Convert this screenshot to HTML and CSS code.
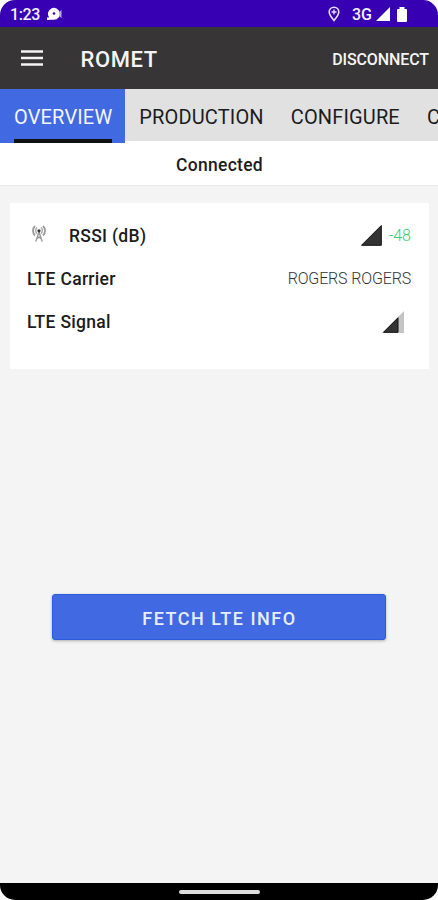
FILE: index.html
```
<!DOCTYPE html>
<html lang="en">
<head>
    <meta charset="UTF-8">
    <meta name="viewport" content="width=device-width, initial-scale=1.0">
    <title>Romet</title>
    <link rel="stylesheet" href="styles.css">
</head>
<body>
    <div class="phone">
        <div class="status-bar">
            <span class="clock">1:23</span>
            <svg class="notify-icon" width="16" height="14" viewBox="0 0 16 14">
                <path d="M0 13V10.500h2.200a6 6 0 1 1 4.800 2.300H3.500z" fill="#fff"/>
                <path d="M12.500 4.500l2-1.500v8l-2-1.500z" fill="#b9a6ea"/>
                <circle cx="7" cy="6.500" r="1.300" fill="#3700b3"/>
            </svg>
            <svg class="pin-icon" width="12" height="16" viewBox="0 0 12 16">
                <path d="M6 14.500C3 11 1.200 8.600 1.200 6a4.800 4.800 0 0 1 9.600 0c0 2.600-1.800 5-4.800 8.500z" fill="none" stroke="#e6defa" stroke-width="1.600"/>
                <path d="M6 3.500v5M3.500 6h5" stroke="#e6defa" stroke-width="1.400"/>
            </svg>
            <span class="network">3G</span>
            <svg class="cell-icon" width="14" height="14" viewBox="0 0 14 14">
                <path d="M0 14L14 0v14z" fill="#fff"/>
            </svg>
            <svg class="battery-icon" width="10" height="15" viewBox="0 0 10 15">
                <path d="M2.500 0h5v2H9a1 1 0 0 1 1 1v11a1 1 0 0 1-1 1H1a1 1 0 0 1-1-1V3a1 1 0 0 1 1-1h1.500z" fill="#fff"/>
            </svg>
        </div>

        <div class="app-bar">
            <svg class="menu-icon" width="22" height="16" viewBox="0 0 22 16">
                <path d="M0 1.500h22M0 8h22M0 14.500h22" stroke="#f4f4f4" stroke-width="2.600"/>
            </svg>
            <h1>ROMET</h1>
            <span class="disconnect">DISCONNECT</span>
        </div>

        <div class="tabs">
            <div class="tab active"><span>OVERVIEW</span></div>
            <div class="tab"><span>PRODUCTION</span></div>
            <div class="tab"><span>CONFIGURE</span></div>
            <div class="tab"><span>C</span></div>
        </div>

        <div class="connection">Connected</div>

        <div class="content">
            <div class="card">
                <div class="row">
                    <svg class="antenna-icon" width="14" height="18" viewBox="0 0 14 18">
                        <path d="M3 1C.4 3.500.4 8 3 10.500M11 1c2.600 2.500 2.600 7 0 9.500" fill="none" stroke="#999" stroke-width="1.800"/>
                        <path d="M5 2.500c-1.500 1.800-1.500 4.500 0 6.300M9 2.500c1.500 1.800 1.500 4.500 0 6.300" fill="none" stroke="#aaa" stroke-width="1.400"/>
                        <path d="M7 7L3.800 16.500M7 7l3.200 9.500M5.500 11.500l3.500 2M8.500 11.500l-3.500 2" fill="none" stroke="#999" stroke-width="1.400"/>
                        <circle cx="7" cy="5.800" r="1.600" fill="#333"/>
                    </svg>
                    <span class="label">RSSI (dB)</span>
                    <svg class="rssi-icon" width="22" height="22" viewBox="0 0 22 22">
                        <path d="M1.500 21.300L21.300 1.500v19.800z" fill="#333" stroke="#111" stroke-width="1"/>
                    </svg>
                    <span class="rssi-value">-48</span>
                </div>
                <div class="row">
                    <span class="label">LTE Carrier</span>
                    <span class="carrier-value">ROGERS ROGERS</span>
                </div>
                <div class="row">
                    <span class="label">LTE Signal</span>
                    <svg class="signal-icon" width="22" height="22" viewBox="0 0 22 22">
                        <path d="M0 22L22 0v22z" fill="#c4c4c4"/>
                        <path d="M1.500 21.300L16 6.800v14.500z" fill="#333" stroke="#111" stroke-width="1"/>
                    </svg>
                </div>
            </div>
            <button class="fetch-btn">FETCH LTE INFO</button>
        </div>

        <div class="nav-bar">
            <div class="handle"></div>
        </div>
    </div>
</body>
</html>
```
FILE: styles.css
```
body {
    margin: 0;
    background: #fff;
    font-family: Roboto, sans-serif;
}

.phone {
    display: flex;
    flex-direction: column;
    width: 438px;
    height: 900px;
    border-radius: 15px;
    overflow: hidden;
    background: #f4f4f4;
}

.status-bar {
    display: flex;
    align-items: center;
    box-sizing: border-box;
    height: 27px;
    padding: 1px 31px 0 10px;
    background: #3700b3;
    color: #f4f0ff;
    font-size: 16px;
    font-weight: 500;
}

.clock {
    letter-spacing: -0.4px;
}

.notify-icon {
    margin-left: 7px;
}

.pin-icon {
    margin-left: auto;
}

.network {
    margin-left: 12px;
}

.cell-icon {
    margin-left: 4px;
}

.battery-icon {
    margin-left: 7px;
}

.app-bar {
    display: flex;
    align-items: center;
    box-sizing: border-box;
    height: 62px;
    padding: 3px 9px 0 21px;
    background: #373535;
    color: #f4f4f4;
}

.menu-icon {
    margin-top: -4px;
}

h1 {
    margin: 0 0 0 37.500px;
    font-size: 22px;
    font-weight: 500;
    letter-spacing: 0.6px;
}

.disconnect {
    margin-left: auto;
    font-size: 16px;
    font-weight: 500;
    letter-spacing: -0.1px;
}

.tabs {
    display: flex;
    height: 52px;
    background: #e1e1e1;
}

.tab {
    flex-shrink: 0;
    height: 52px;
    padding: 0 13px 0 14px;
    font-size: 20px;
    letter-spacing: 0.15px;
    line-height: 56px;
    color: #1c1c1c;
    white-space: nowrap;
}

/* hangs slightly below the tab strip */
.active {
    position: relative;
    height: 54px;
    background: #4169e1;
    color: #f4f6ff;
}

.active span {
    display: block;
    box-sizing: border-box;
    height: 54px;
    border-bottom: 4px solid #111;
}

.connection {
    height: 44px;
    border-bottom: 1px solid #e8e8e8;
    background: #fff;
    font-size: 17.500px;
    font-weight: 500;
    letter-spacing: 0.28px;
    line-height: 49px;
    text-align: center;
    text-indent: 1px;
    color: #1c1c1c;
}

.content {
    flex: 1;
    padding: 17px 9px 0 10px;
}

.card {
    box-sizing: border-box;
    height: 166px;
    padding: 11px 18px 0 17px;
    background: #fff;
}

.row {
    display: flex;
    align-items: center;
    height: 43.300px;
}

.label {
    margin-right: auto;
    font-size: 17.500px;
    font-weight: 500;
    letter-spacing: 0.3px;
    color: #1c1c1c;
}

.antenna-icon {
    margin: -3px 23px 0 5px;
}

.rssi-icon {
    margin: -2px 7px 0 0;
}

.rssi-value {
    font-size: 16px;
    font-weight: 300;
    color: #35d06c;
}

.carrier-value {
    font-size: 16px;
    font-weight: 300;
    letter-spacing: -0.15px;
    color: #333;
}

.signal-icon {
    margin: -1px 7px 0 0;
}

.fetch-btn {
    display: block;
    width: 334px;
    height: 46px;
    margin: 225px 0 0 42px;
    padding: 2px 0 0 1px;
    border: 1px solid #2d5bdb;
    border-radius: 3px;
    background: #4169e1;
    box-shadow: 0 1px 3px rgba(0, 0, 0, 0.3);
    color: #e8edfc;
    font-family: inherit;
    font-size: 18px;
    font-weight: 500;
    letter-spacing: 1.500px;
}

.nav-bar {
    display: flex;
    justify-content: center;
    align-items: center;
    height: 17px;
    background: #000;
}

.handle {
    width: 81px;
    height: 4px;
    border-radius: 2px;
    background: #ddd;
}
```
